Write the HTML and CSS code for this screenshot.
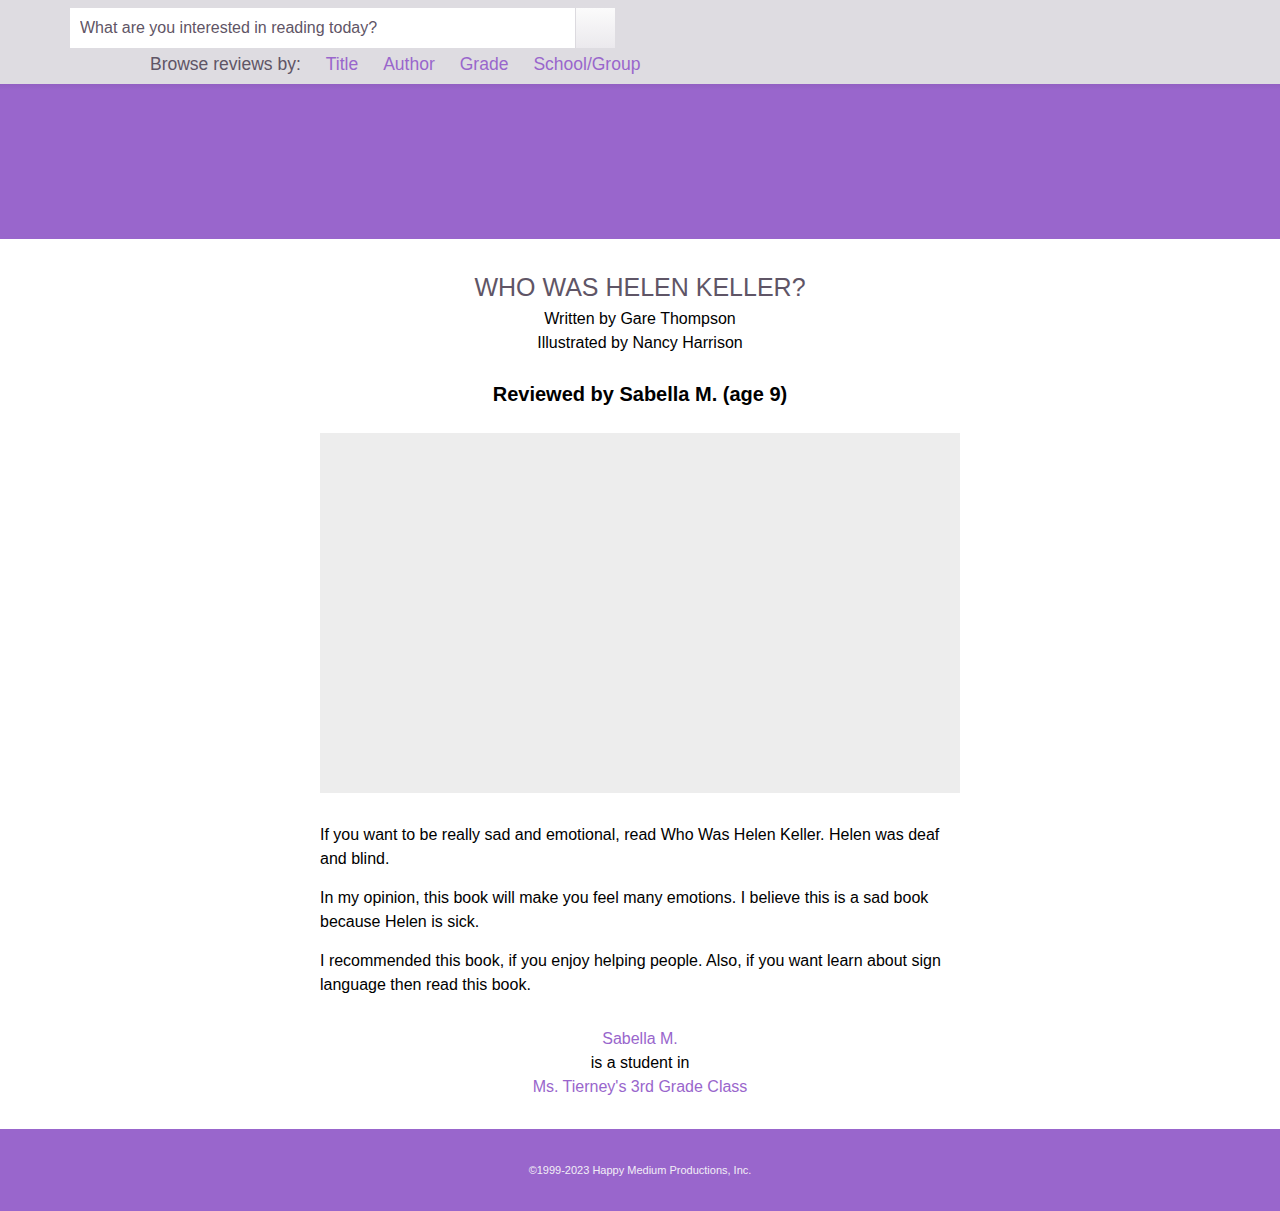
FILE: index.html
```
<!DOCTYPE html>
<html lang="en">
<head>
<meta charset="utf-8">
<title>Who Was Helen Keller? - Review</title>
<link rel="stylesheet" href="styles.css">
</head>
<body>
<header class="topbar">
  <form class="search">
    <input class="search-input" type="text" placeholder="What are you interested in reading today?">
    <button class="search-btn" type="button" aria-label="Search"></button>
  </form>
  <nav class="browse">
    <span class="browse-label">Browse reviews by:</span>
    <a href="#">Title</a>
    <a href="#">Author</a>
    <a href="#">Grade</a>
    <a href="#">School/Group</a>
  </nav>
</header>
<div class="banner"></div>
<main class="review">
  <h1 class="book-title">WHO WAS HELEN KELLER?</h1>
  <div class="credits">
    <div>Written by Gare Thompson</div>
    <div>Illustrated by Nancy Harrison</div>
  </div>
  <h2 class="reviewer">Reviewed by Sabella M. (age 9)</h2>
  <div class="art"></div>
  <div class="body">
    <p>If you want to be really sad and emotional, read Who Was Helen Keller. Helen was deaf and blind.</p>
    <p>In my opinion, this book will make you feel many emotions. I believe this is a sad book because Helen is sick.</p>
    <p>I recommended this book, if you enjoy helping people. Also, if you want learn about sign language then read this book.</p>
  </div>
  <div class="author">
    <a href="#">Sabella M.</a>
    <div>is a student in</div>
    <a href="#">Ms. Tierney's 3rd Grade Class</a>
  </div>
</main>
<footer class="footer">©1999-2023 Happy Medium Productions, Inc.</footer>
</body>
</html>
```
FILE: styles.css
```
* { box-sizing: border-box; }
body {
  margin: 0;
  font-family: "Liberation Sans", Arial, sans-serif;
  color: #000;
  background: #fff;
}
a { color: #9966cc; text-decoration: none; }

.topbar {
  background: #dedce1;
  height: 84px;
  padding-top: 8px;
}
.search {
  display: flex;
  margin: 0 0 0 70px;
  width: 545px;
  height: 40px;
}
.search-input {
  flex: 1;
  height: 40px;
  border: 0;
  margin: 0;
  padding: 0 10px;
  font-family: "Liberation Sans", Arial, sans-serif;
  font-size: 16px;
  background: #fff;
  color: #5f5566;
  outline: none;
}
.search-input::placeholder { color: #5f5566; opacity: 1; }
.search-btn {
  width: 40px;
  height: 40px;
  margin: 0;
  padding: 0;
  border: 0;
  border-left: 1px solid #dcdadf;
  background: linear-gradient(#fbfbfb, #ebe9ed);
}
.browse {
  display: flex;
  gap: 25px;
  margin: 4px 0 0 150px;
  font-size: 17.5px;
  line-height: 24px;
}
.browse-label { color: #5f5566; }

.banner {
  height: 155px;
  background: linear-gradient(#9260c2 0, #9966cc 6px, #9966cc 100%);
}

.review {
  width: 640px;
  margin: 0 auto;
  padding-top: 32px;
  text-align: center;
}
.book-title {
  margin: 0;
  font-size: 25px;
  line-height: 32px;
  font-weight: normal;
  color: #5f5566;
}
.credits {
  margin-top: 4px;
  font-size: 16px;
  line-height: 24px;
}
.reviewer {
  margin: 27px 0 0;
  font-size: 20px;
  line-height: 24px;
  font-weight: bold;
}
.art {
  margin-top: 27px;
  height: 360px;
  background: #ededed;
}
.body {
  margin-top: 30px;
  text-align: left;
  font-size: 16px;
  line-height: 24px;
}
.body p { margin: 0 0 15px; }
.body p:last-child { margin-bottom: 0; }
.author {
  margin-top: 30px;
  padding-bottom: 30px;
  font-size: 16px;
  line-height: 24px;
  display: flex;
  flex-direction: column;
  align-items: center;
}

.footer {
  background: #9966cc;
  height: 82px;
  padding-top: 34px;
  text-align: center;
  color: #f2eef6;
  font-size: 11px;
  line-height: 14px;
}
```
